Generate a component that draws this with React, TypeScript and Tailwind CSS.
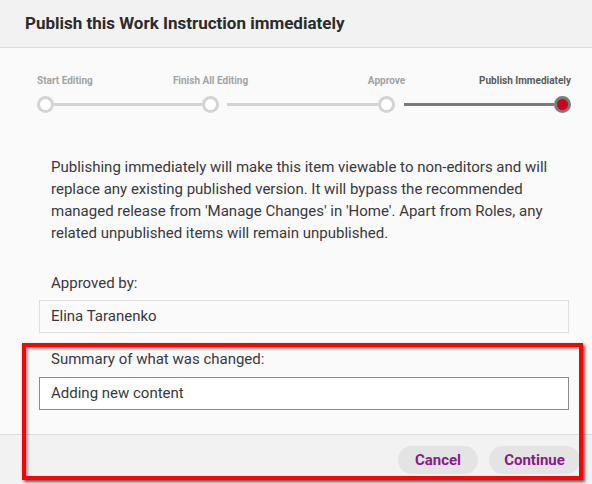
import React from 'react';

const steps = [
  { label: 'Start Editing', align: 'justify-start', col: 'col-start-1 col-span-2' },
  { label: 'Finish All Editing', align: 'justify-center', col: 'col-start-3' },
  { label: 'Approve', align: 'justify-center', col: 'col-start-5' },
  { label: 'Publish Immediately', align: 'justify-end', col: 'col-start-7' },
];

const Circle: React.FC<{ active?: boolean }> = ({ active }) => (
  <div
    className={`w-[17px] h-[17px] rounded-full border-[3px] ${
      active ? 'border-[#7a7a7a] bg-[#d0021b]' : 'border-[#d3d3d3] bg-white'
    }`}
  />
);

const App: React.FC = () => {
  return (
    <div className="relative w-[592px] h-[484px] overflow-hidden bg-[#fafafa] font-['Roboto',sans-serif] text-[#383840]">
      {/* Header */}
      <div className="h-[48px] flex items-center px-[25px] bg-[#f2f2f2] border-b border-[#dcdcdc]">
        <h1 className="text-[17px] font-bold text-[#2b2b2b]">Publish this Work Instruction immediately</h1>
      </div>

      {/* Stepper */}
      <div className="pl-[37px] pt-[27px]">
        <div className="grid grid-cols-[17px_148px_17px_159px_17px_159px_17px] items-center">
          {steps.map((s, i) => (
            <div key={s.label} className={`${s.col} flex ${s.align} h-[12px] items-center`}>
              <span
                className={`whitespace-nowrap text-[10px] leading-[12px] font-bold ${
                  i === 3 ? 'text-[#5a5a5a]' : 'text-[#a3a3a3]'
                }`}
              >
                {s.label}
              </span>
            </div>
          ))}
          <div className="col-start-1 row-start-2 mt-[9px]"><Circle /></div>
          <div className="row-start-2 mt-[9px] h-[3px] bg-[#d3d3d3]" />
          <div className="row-start-2 mt-[9px]"><Circle /></div>
          <div className="row-start-2 mt-[9px] ml-[8px] h-[3px] bg-[#d3d3d3]" />
          <div className="row-start-2 mt-[9px]"><Circle /></div>
          <div className="row-start-2 mt-[9px] ml-[9px] h-[3px] bg-[#7a7a7a]" />
          <div className="row-start-2 mt-[9px]"><Circle active /></div>
        </div>
      </div>

      {/* Body */}
      <div className="px-[39px]">
        <p className="mt-[43px] ml-[12px] w-[510px] text-[15px] leading-[22px]">
          Publishing immediately will make this item viewable to non-editors and will replace any existing
          published version. It will bypass the recommended managed release from 'Manage Changes' in 'Home'.
          Apart from Roles, any related unpublished items will remain unpublished.
        </p>

        <div className="mt-[28px] pl-[12px] text-[15px] leading-[22px]">Approved by:</div>
        <div className="mt-[6px] w-[530px] h-[33px] border border-[#dedede] flex items-center px-[11px] text-[15px]">
          Elina Taranenko
        </div>

        <div className="mt-[15px] pl-[12px] text-[15px] leading-[22px]">Summary of what was changed:</div>
        <div className="mt-[7px] w-[530px] h-[33px] border border-[#8a8a8a] bg-white flex items-center px-[11px] text-[15px]">
          Adding new content
        </div>
      </div>

      {/* Footer */}
      <div className="mt-[24px] h-[50px] bg-[#f2f2f2] border-t border-[#dcdcdc] flex justify-end items-start pt-[11px] pr-[12px] gap-[11px]">
        <button className="w-[80px] h-[28px] rounded-full bg-[#e4e4e4] text-[15px] font-bold text-[#8a1a88]">
          Cancel
        </button>
        <button className="w-[91px] h-[28px] rounded-full bg-[#e4e4e4] text-[15px] font-bold text-[#8a1a88]">
          Continue
        </button>
      </div>

      {/* Annotation highlight */}
      <div className="absolute left-[22px] top-[343px] w-[561px] h-[137px] border-4 border-[#ff0000] shadow-[2px_2px_3px_rgba(0,0,0,0.65),inset_2px_2px_3px_rgba(0,0,0,0.35)] pointer-events-none" />
    </div>
  );
};

export default App;
